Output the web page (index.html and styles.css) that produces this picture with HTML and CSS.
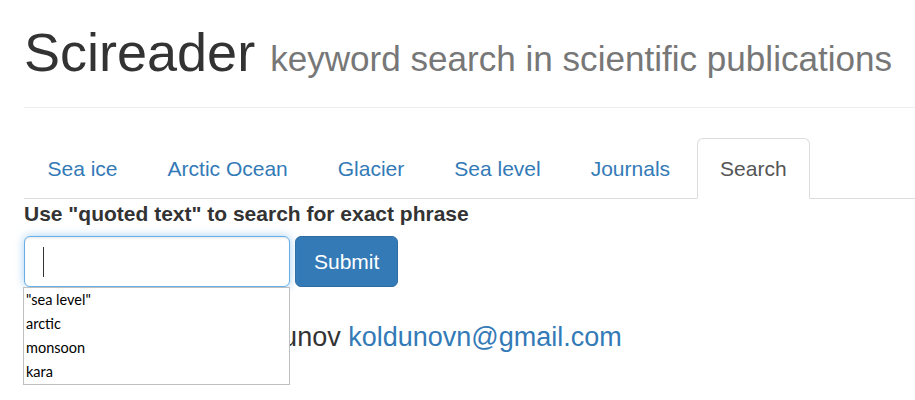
FILE: index.html
```html
<!DOCTYPE html>
<html lang="en">
<head>
<meta charset="utf-8">
<title>Scireader</title>
<link rel="stylesheet" href="styles.css">
</head>
<body>
<div class="container">
  <div class="page-header">
    <h1>Scireader <small>keyword search in scientific publications</small></h1>
  </div>
  <ul class="nav-tabs">
    <li><a href="#">Sea ice</a></li>
    <li><a href="#">Arctic Ocean</a></li>
    <li><a href="#">Glacier</a></li>
    <li><a href="#">Sea level</a></li>
    <li><a href="#">Journals</a></li>
    <li class="active"><a href="#">Search</a></li>
  </ul>
  <div class="tab-content">
    <form class="search-form">
      <label class="hint" for="q">Use "quoted text" to search for exact phrase</label>
      <div class="search-row">
        <div class="input-wrap">
          <input class="form-control" id="q" type="text">
          <span class="text-caret"></span>
          <ul class="suggestions">
            <li>"sea level"</li>
            <li>arctic</li>
            <li>monsoon</li>
            <li>kara</li>
          </ul>
        </div>
        <button class="btn" type="button">Submit</button>
      </div>
    </form>
    <p class="contact">Contact: Nikolay Koldunov <a href="#">koldunovn@gmail.com</a></p>
  </div>
</div>
</body>
</html>
```

FILE: styles.css
```css
* { box-sizing: border-box; }

html, body {
  min-height: 400px;
}

body {
  margin: 0;
  font-family: "Liberation Sans", Arial, sans-serif;
  font-size: 21px;
  line-height: 1.42857;
  color: #333;
  background: #fff;
}

.container {
  padding-left: 24px;
  padding-bottom: 60px;
}

.page-header {
  padding: 23px 0 25px;
  border-bottom: 1px solid #eee;
  margin-bottom: 30px;
}

.page-header h1 {
  margin: 0;
  font-size: 54px;
  font-weight: normal;
  line-height: 1.1;
  color: #333;
}

.page-header h1 small {
  font-size: 65%;
  color: #777;
  font-weight: normal;
}

.nav-tabs {
  display: flex;
  list-style: none;
  margin: 0;
  padding: 0;
  border-bottom: 1px solid #ddd;
}

.nav-tabs li {
  margin-bottom: -1px;
  margin-right: 3px;
}

.nav-tabs a {
  display: block;
  padding: 14.5px 22.5px;
  line-height: 30px;
  border: 1px solid transparent;
  border-radius: 6px 6px 0 0;
  color: #337ab7;
  text-decoration: none;
}

.nav-tabs .active a {
  color: #555;
  background: #fff;
  border-color: #ddd #ddd transparent;
}

.hint {
  display: inline-block;
  font-weight: bold;
  margin-bottom: 7px;
}

.search-row {
  display: flex;
  align-items: flex-start;
  gap: 5px;
}

.input-wrap {
  position: relative;
  width: 266px;
}

.form-control {
  display: block;
  width: 100%;
  height: 51px;
  padding: 9px 18px;
  font: inherit;
  color: #555;
  background: #fff;
  border: 1.5px solid #66afe9;
  border-radius: 6px;
  box-shadow: inset 0 1.5px 1.5px rgba(0, 0, 0, 0.075), 0 0 10px rgba(102, 175, 233, 0.6);
  outline: none;
}

.text-caret {
  position: absolute;
  left: 19px;
  top: 11px;
  width: 1px;
  height: 30px;
  background: #333;
}

.suggestions {
  position: absolute;
  left: -1px;
  top: 51px;
  width: 267px;
  margin: 0;
  padding: 0;
  list-style: none;
  background: #fff;
  border: 1px solid #bfbfbf;
  font-family: Lato, "Open Sans", sans-serif;
  font-size: 14.5px;
  color: #000;
  z-index: 10;
}

.suggestions li {
  height: 24px;
  line-height: 24px;
  padding-left: 2px;
}

.btn {
  height: 51px;
  padding: 9px 18px;
  font: inherit;
  line-height: 30px;
  color: #fff;
  background: #337ab7;
  border: 1.5px solid #2e6da4;
  border-radius: 6px;
}

.contact {
  margin: 36px 0 0;
  font-size: 27px;
  line-height: 1.1;
}

.contact a {
  color: #337ab7;
  text-decoration: none;
}
```
